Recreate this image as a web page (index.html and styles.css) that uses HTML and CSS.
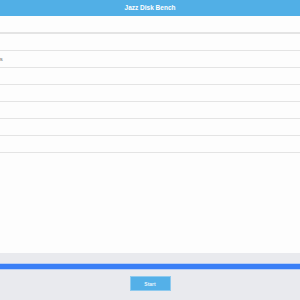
FILE: index.html
```html
<!DOCTYPE html>
<html lang="en">
<head>
  <meta charset="utf-8">
  <meta name="viewport" content="width=device-width, initial-scale=1.0">
  <title>Jazz Disk Bench</title>
  <link rel="stylesheet" href="styles.css">
</head>
<body>
  <div class="app">
    <div class="header">Jazz Disk Bench</div>

    <!-- result rows -->
    <div class="list">
      <div class="row"></div>
      <div class="row"><span class="label">Write</span></div>
      <div class="row"><span class="label">Reads</span></div>
      <div class="row"></div>
      <div class="row"></div>
      <div class="row"></div>
      <div class="row"></div>
      <div class="row"></div>
    </div>

    <div class="footer">
      <div class="progress"></div>
      <button class="start">Start</button>
    </div>
  </div>
</body>
</html>
```

FILE: styles.css
```css
* {
  font-family: 'Liberation Sans', Arial, sans-serif;
  box-sizing: border-box;
}

body {
  margin: 0;
}

.app {
  display: flex;
  flex-direction: column;
  width: 300px;
  height: 300px;
  background: #fdfdfd;
}

.header {
  height: 16px;
  line-height: 16px;
  background-color: #51afe6;
  color: #fff;
  font-size: 6.5px;
  font-weight: bold;
  text-align: center;
}

.list {
  flex: 1;
  padding-top: 1px;
}

.row {
  height: 17px;
  border-bottom: 1px solid #e4e4e4;
  display: flex;
  align-items: center;
  overflow: hidden;
}

.row:first-child {
  border-bottom-width: 2px;
}

.label {
  margin-left: -14.5px;
  font-size: 6px;
  color: #777;
}

.footer {
  height: 47px;
  background-color: #e9eaee;
  display: flex;
  flex-direction: column;
  align-items: center;
  padding-top: 10px;
}

.progress {
  width: 100%;
  height: 7px;
  background-color: #3a7ff6;
  border-top: 1px solid #b9cff5;
  border-bottom: 1px solid #b9cff5;
}

.start {
  margin-top: 6px;
  width: 41px;
  height: 15px;
  padding: 0;
  border: 1px solid #8fcaee;
  background-color: #54b0e8;
  color: #e8f4fc;
  font-size: 5px;
  font-weight: bold;
}
```
